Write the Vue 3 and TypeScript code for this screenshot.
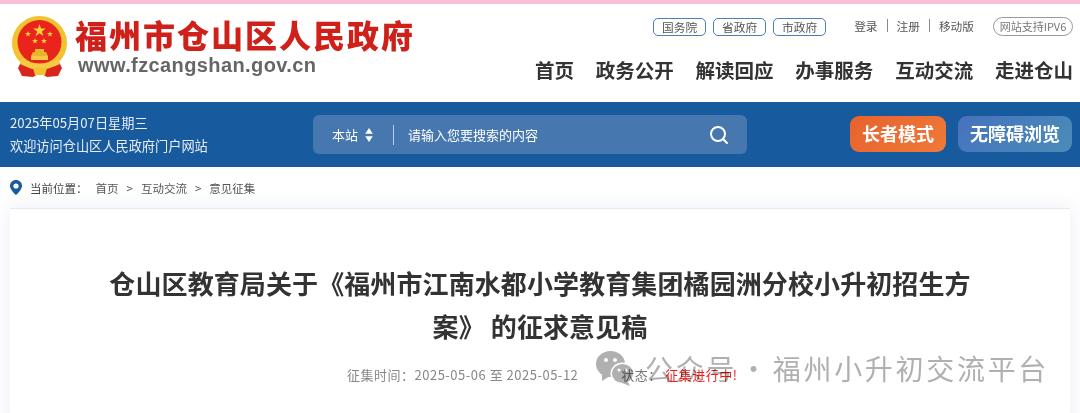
<script setup lang="ts">
const levels = ["国务院", "省政府", "市政府"];
const navItems = ["首页", "政务公开", "解读回应", "办事服务", "互动交流", "走进仓山"];
const crumbs = ["首页", "互动交流", "意见征集"];
</script>

<template>
  <div class="page">
    <div class="strip"></div>

    <header class="top">
      <div class="brand">
        <svg class="emblem" viewBox="12 16 56 62" width="56" height="62">
          <path d="M22 60 L18 68 L22 76 L33 77 L40 73 L47 77 L58 76 L62 68 L58 60 Z" fill="#d8261c" />
          <ellipse cx="39.5" cy="43" rx="27.5" ry="27" fill="#f2c230" />
          <ellipse cx="39.5" cy="42" rx="22" ry="22" fill="#e9241d" />
          <path d="M22 59 Q40 68 58 59 L60 64 Q40 74 20 64 Z" fill="#f5cb45" />
          <path d="M33 68 H47 L45 75 H35 Z" fill="#f2c230" />
          <path d="M33 52 H46 L48 56 H31 Z" fill="#e8b52c" />
          <path d="M35 49 H44 V52 H35 Z" fill="#e8b52c" />
          <path d="M31 56 H48 V60 H31 Z" fill="#f2c844" />
          <polygon fill="#f7d23c" points="39.5,24 41,28.6 45.8,28.6 41.9,31.4 43.4,36 39.5,33.2 35.6,36 37.1,31.4 33.2,28.6 38,28.6" />
          <polygon fill="#f7d23c" points="28,31 28.7,33.1 31,33.1 29.1,34.4 29.9,36.6 28,35.3 26.1,36.6 26.9,34.4 25,33.1 27.3,33.1" />
          <polygon fill="#f7d23c" points="50,31 50.7,33.1 53,33.1 51.1,34.4 51.9,36.6 50,35.3 48.1,36.6 48.9,34.4 47,33.1 49.3,33.1" />
          <polygon fill="#f7d23c" points="35,38 35.7,40.1 38,40.1 36.1,41.4 36.9,43.6 35,42.3 33.1,43.6 33.9,41.4 32,40.1 34.3,40.1" />
          <polygon fill="#f7d23c" points="44,38 44.7,40.1 47,40.1 45.1,41.4 45.9,43.6 44,42.3 42.1,43.6 42.9,41.4 41,40.1 43.3,40.1" />
        </svg>
        <div class="brand-text">
          <div class="site-name">福州市仓山区人民政府</div>
          <div class="site-url">www.fzcangshan.gov.cn</div>
        </div>
      </div>

      <div class="top-right">
        <div class="links">
          <div class="levels">
            <span v-for="l in levels" :key="l" class="level">{{ l }}</span>
          </div>
          <div class="account">
            <span>登录</span><i></i><span>注册</span><i></i><span>移动版</span>
          </div>
          <span class="ipv6">网站支持IPV6</span>
        </div>
        <nav class="nav">
          <a v-for="n in navItems" :key="n">{{ n }}</a>
        </nav>
      </div>
    </header>

    <section class="band">
      <div class="date">
        <div>2025年05月07日星期三</div>
        <div>欢迎访问仓山区人民政府门户网站</div>
      </div>
      <div class="search">
        <span class="scope">本站</span>
        <svg class="updown" width="8" height="14" viewBox="0 0 8 14">
          <path d="M4 0 L7.8 5.8 H0.2 Z M4 14 L0.2 8.2 H7.8 Z" fill="#fff" />
        </svg>
        <i class="divider"></i>
        <span class="placeholder">请输入您要搜索的内容</span>
        <svg class="glass" width="20" height="20" viewBox="0 0 20 20" fill="none" stroke="#fff" stroke-width="2">
          <circle cx="9" cy="9" r="7" />
          <path d="M14 14 L18 18" stroke-linecap="round" />
        </svg>
      </div>
      <div class="modes">
        <span class="mode elder">长者模式</span>
        <span class="mode access">无障碍浏览</span>
      </div>
    </section>

    <div class="crumbs">
      <svg width="12" height="15" viewBox="0 0 12 15">
        <path fill-rule="evenodd" fill="#175a9e" d="M6 0 C2.7 0 0 2.6 0 5.9 C0 9.8 6 15 6 15 C6 15 12 9.8 12 5.9 C12 2.6 9.3 0 6 0 Z M6 3.4 A2.6 2.6 0 1 1 6 8.6 A2.6 2.6 0 1 1 6 3.4 Z" />
      </svg>
      <span class="here">当前位置：</span>
      <template v-for="(c, i) in crumbs" :key="c">
        <span v-if="i > 0" class="sep">&gt;</span>
        <span>{{ c }}</span>
      </template>
    </div>

    <main class="card">
      <h1>仓山区教育局关于《福州市江南水都小学教育集团橘园洲分校小升初招生方案》 的征求意见稿</h1>
      <div class="meta">
        <span>征集时间：2025-05-06 至 2025-05-12</span>
        <span class="state">状态： <em>征集进行中!</em></span>
      </div>
    </main>

    <div class="watermark">
      <svg width="38" height="35" viewBox="0 0 38 35">
        <ellipse cx="14.5" cy="13" rx="14.5" ry="13" fill="#b0b0b0" />
        <path d="M6 22 L6 30 L14 25 Z" fill="#b0b0b0" />
        <ellipse cx="26.5" cy="22.5" rx="12" ry="11" fill="#fff" />
        <ellipse cx="26.5" cy="22.5" rx="10.5" ry="9.5" fill="#b0b0b0" />
        <path d="M31 29 L34 35 L26 32 Z" fill="#b0b0b0" />
        <circle cx="10" cy="9" r="2" fill="#fff" />
        <circle cx="19" cy="9" r="2" fill="#fff" />
        <circle cx="23" cy="19" r="1.5" fill="#fff" />
        <circle cx="30" cy="19" r="1.5" fill="#fff" />
      </svg>
      <span class="mark-text">公众号 · 福州小升初交流平台</span>
    </div>
  </div>
</template>

<style>
html,
body {
  margin: 0;
  background: #fff;
}
</style>

<style scoped>
.page {
  position: relative;
  width: 1080px;
  height: 413px;
  overflow: hidden;
  font-family: "Noto Sans CJK SC", "Liberation Sans", sans-serif;
  background: #fff;
}
.strip {
  height: 4px;
  background: #fcbdd6;
}
.top {
  height: 98px;
  background: #fff;
  display: flex;
  justify-content: space-between;
}
.brand {
  display: flex;
  align-items: flex-start;
  padding: 12px 0 0 12px;
  gap: 7px;
}
.site-name {
  font-size: 32px;
  line-height: 37px;
  font-weight: 900;
  color: #d0201a;
  letter-spacing: 2px;
}
.site-url {
  margin-left: 3px;
  font-family: "Liberation Sans", sans-serif;
  font-weight: 700;
  font-size: 20px;
  line-height: 24px;
  letter-spacing: 0.4px;
  color: #666;
}
.top-right {
  display: flex;
  flex-direction: column;
  align-items: flex-end;
  padding-right: 7px;
}
.links {
  display: flex;
  align-items: center;
  margin-top: 13px;
  font-size: 11.7px;
  color: #555;
}
.levels {
  display: flex;
  gap: 7px;
}
.level {
  width: 51px;
  height: 16px;
  line-height: 16px;
  text-align: center;
  border: 1px solid #4a80b8;
  border-radius: 5px;
  color: #555;
}
.account {
  display: flex;
  align-items: center;
  margin: -3px 19px 0 28px;
}
.account i {
  width: 1px;
  height: 13px;
  margin: 0 9px;
  background: #8a8a8a;
}
.ipv6 {
  width: 78px;
  height: 17px;
  line-height: 17px;
  text-align: center;
  border: 1px solid #999;
  border-radius: 10px;
  font-size: 11px;
  color: #777;
}
.nav {
  display: flex;
  gap: 21.8px;
  margin-top: 21px;
  font-size: 19.5px;
  line-height: 26px;
  font-weight: 700;
  color: #333;
}
.band {
  height: 65px;
  background: #175a9e;
  display: flex;
  align-items: center;
  color: #fff;
}
.date {
  width: 313px;
  box-sizing: border-box;
  padding: 0 0 2px 10px;
  font-size: 13.2px;
  line-height: 23px;
  color: #e8eef6;
}
.search {
  width: 434px;
  height: 39px;
  border-radius: 6px;
  background: #4677ae;
  display: flex;
  align-items: center;
  font-size: 13px;
  box-sizing: border-box;
  padding: 0 18px 0 19px;
}
.updown {
  margin-left: 7px;
}
.divider {
  width: 1px;
  height: 20px;
  margin: 0 14px 0 20px;
  background: #b9cde2;
}
.placeholder {
  flex: 1;
}
.modes {
  display: flex;
  gap: 12px;
  margin: -2px 0 0 103px;
}
.mode {
  height: 36px;
  line-height: 35px;
  border-radius: 9px;
  text-align: center;
  font-size: 18px;
  font-weight: 700;
}
.elder {
  width: 96px;
  background: linear-gradient(135deg, #e8622e, #ee7a38);
}
.access {
  width: 114px;
  background: linear-gradient(135deg, #4672bd, #4a8cb8);
}
.crumbs {
  height: 41px;
  display: flex;
  align-items: center;
  padding-left: 10px;
  font-size: 11.5px;
  color: #555;
}
.here {
  margin: 0 8px 0 8px;
  color: #444;
}
.sep {
  margin: 0 8px;
}
.card {
  margin: 0 10px;
  height: 220px;
  background: #fff;
  border-top: 1px solid #e8eaf0;
  box-shadow: 0 0 18px rgba(130, 140, 190, 0.16);
  padding-top: 52px;
  box-sizing: border-box;
}
h1 {
  width: 880px;
  margin: 0 auto;
  text-align: center;
  font-size: 26px;
  line-height: 43px;
  letter-spacing: 0.1px;
  font-weight: 700;
  color: #333;
}
.meta {
  display: flex;
  gap: 43px;
  margin: 19px 0 0 337px;
  font-size: 13px;
  line-height: 18px;
  letter-spacing: 0.5px;
  color: #888;
}
.state {
  color: #777;
}
.state em {
  font-style: normal;
  color: #f01818;
}
.watermark {
  position: absolute;
  left: 596px;
  top: 350px;
  display: flex;
  align-items: center;
  gap: 11px;
  font-size: 28px;
  line-height: 36px;
  letter-spacing: 2.7px;
  color: #b0b0b0;
  mix-blend-mode: multiply;
}
.mark-text {
  word-spacing: -6.5px;
}
</style>
